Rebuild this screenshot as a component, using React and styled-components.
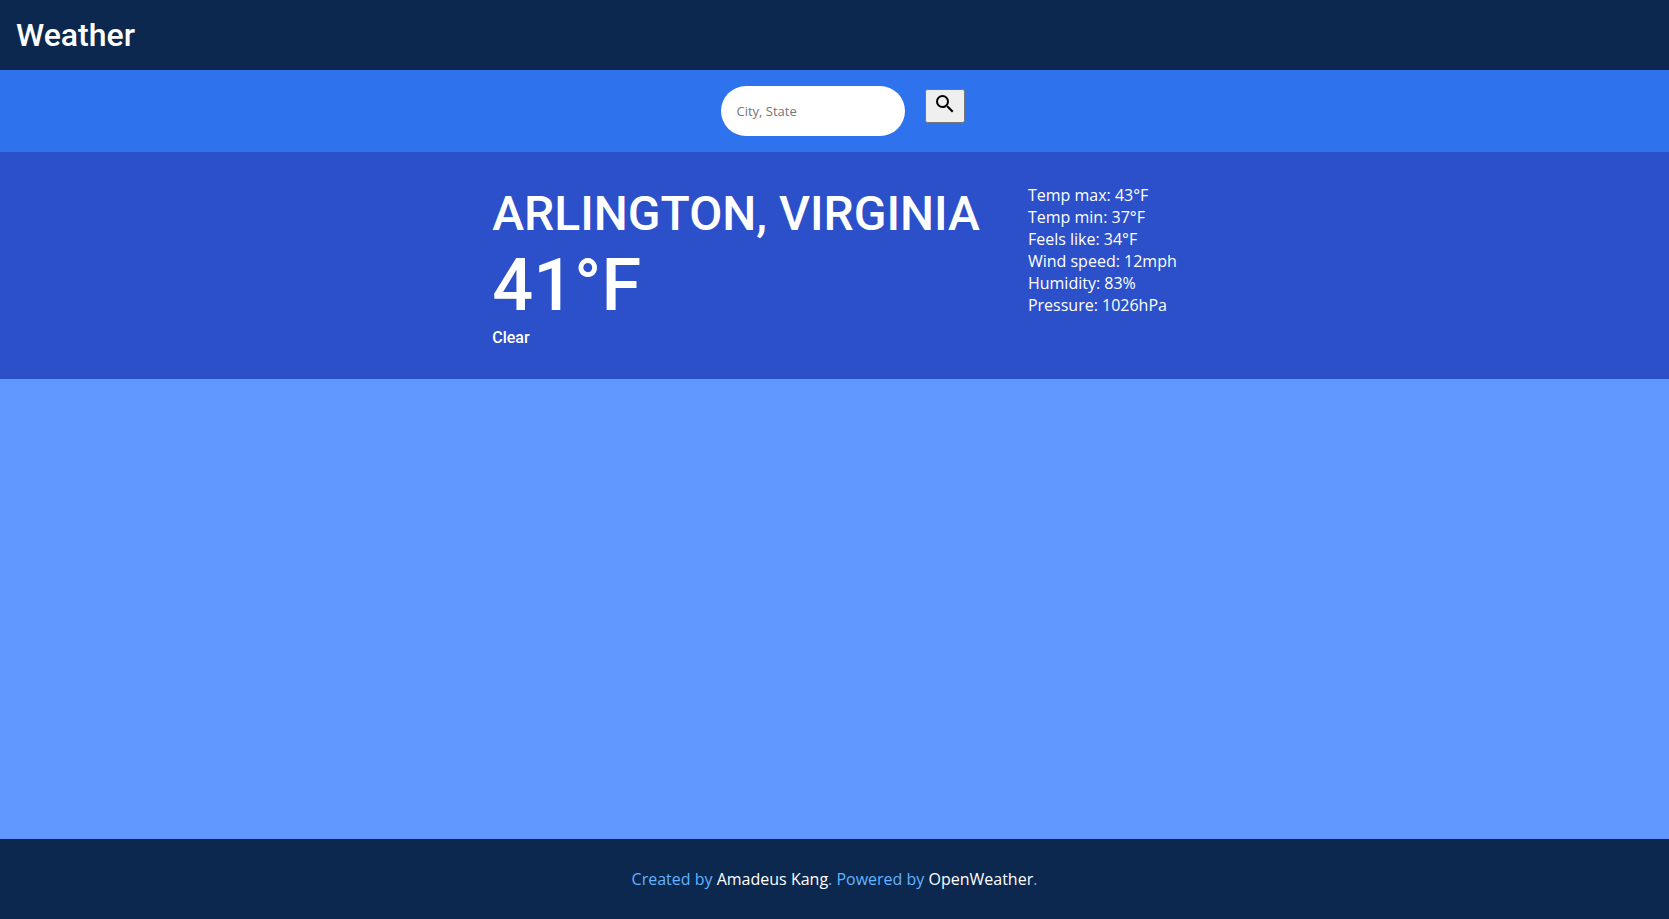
import React from "react";
import styled, { createGlobalStyle } from "styled-components";

const GlobalStyle = createGlobalStyle`
  *, *::before, *::after { box-sizing: border-box; }
  body {
    margin: 0;
    background: #6198ff;
    color: #fff;
    font: 16px/22px "Open Sans", sans-serif;
  }
`;

const Page = styled.div`
  min-height: 100vh;
  display: flex;
  flex-direction: column;
`;

const Header = styled.header`
  padding: 16px;
  background: #0c284f;
`;

const Heading = styled.h1`
  margin: 0;
  font-family: Roboto, sans-serif;
  font-weight: 500;
  font-size: ${(p) => p.$size}px;
  line-height: ${(p) => p.$line}px;
  text-transform: ${(p) => (p.$upper ? "uppercase" : "none")};
`;

const SearchForm = styled.form`
  display: flex;
  justify-content: center;
  align-items: baseline;
  gap: 20px;
  padding: 16px 0 16px 16px;
  background: #2e73ed;
`;

const SearchInput = styled.input`
  width: 184px;
  height: 50px;
  padding: 16px;
  border: 0;
  border-radius: 25px;
  background: #fff;
  color: #222;
  font: 13px/18px "Open Sans", sans-serif;

  &::placeholder { color: #757575; }
`;

const SearchButton = styled.button`
  color: #000;
  font-family: "Open Sans", sans-serif;
  font-size: 12px;
  line-height: 16px;
`;

const Weather = styled.main`
  display: flex;
  flex-wrap: wrap;
  justify-content: center;
  gap: 16px 48px;
  padding: 32px 16px;
  background: #2b50c9;
`;

const Details = styled.ul`
  margin: 0;
  padding: 0;
  list-style: none;
`;

const Footer = styled.footer`
  margin-top: auto;
  padding: 29px 16px;
  background: #0c284f;
  color: #63b3ff;
  text-align: center;
`;

const FooterLink = styled.a`
  color: #fff;
  text-decoration: none;
`;

const details = [
  ["Temp max", "43°F"],
  ["Temp min", "37°F"],
  ["Feels like", "34°F"],
  ["Wind speed", "12mph"],
  ["Humidity", "83%"],
  ["Pressure", "1026hPa"],
];

export default function App() {
  return (
    <Page>
      <GlobalStyle />
      <Header>
        <Heading $size={32} $line={38}>Weather</Heading>
      </Header>
      <SearchForm onSubmit={(e) => e.preventDefault()}>
        <SearchInput type="text" placeholder="City, State" aria-label="City, State" />
        <SearchButton type="submit" aria-label="Search">
          <svg width="24" height="24" viewBox="0 0 24 24" fill="currentColor" aria-hidden="true">
            <path d="M15.5 14h-.79l-.28-.27A6.471 6.471 0 0 0 16 9.5 6.5 6.5 0 1 0 9.5 16c1.61 0 3.09-.59 4.23-1.57l.27.28v.79l5 4.99L20.49 19l-4.99-5zm-6 0C7.01 14 5 11.99 5 9.5S7.01 5 9.5 5 14 7.01 14 9.5 11.99 14 9.5 14z" />
          </svg>
        </SearchButton>
      </SearchForm>
      <Weather>
        <section>
          <Heading as="h2" $size={48} $line={60} $upper>Arlington, Virginia</Heading>
          <Heading as="h3" $size={72} $line={84}>41°F</Heading>
          <Heading as="h4" $size={16} $line={19}>Clear</Heading>
        </section>
        <Details>
          {details.map(([label, value]) => (
            <li key={label}>{label}: {value}</li>
          ))}
        </Details>
      </Weather>
      <Footer>
        Created by <FooterLink href="#author">Amadeus Kang</FooterLink>. Powered by{" "}
        <FooterLink href="#openweather">OpenWeather</FooterLink>.
      </Footer>
    </Page>
  );
}
